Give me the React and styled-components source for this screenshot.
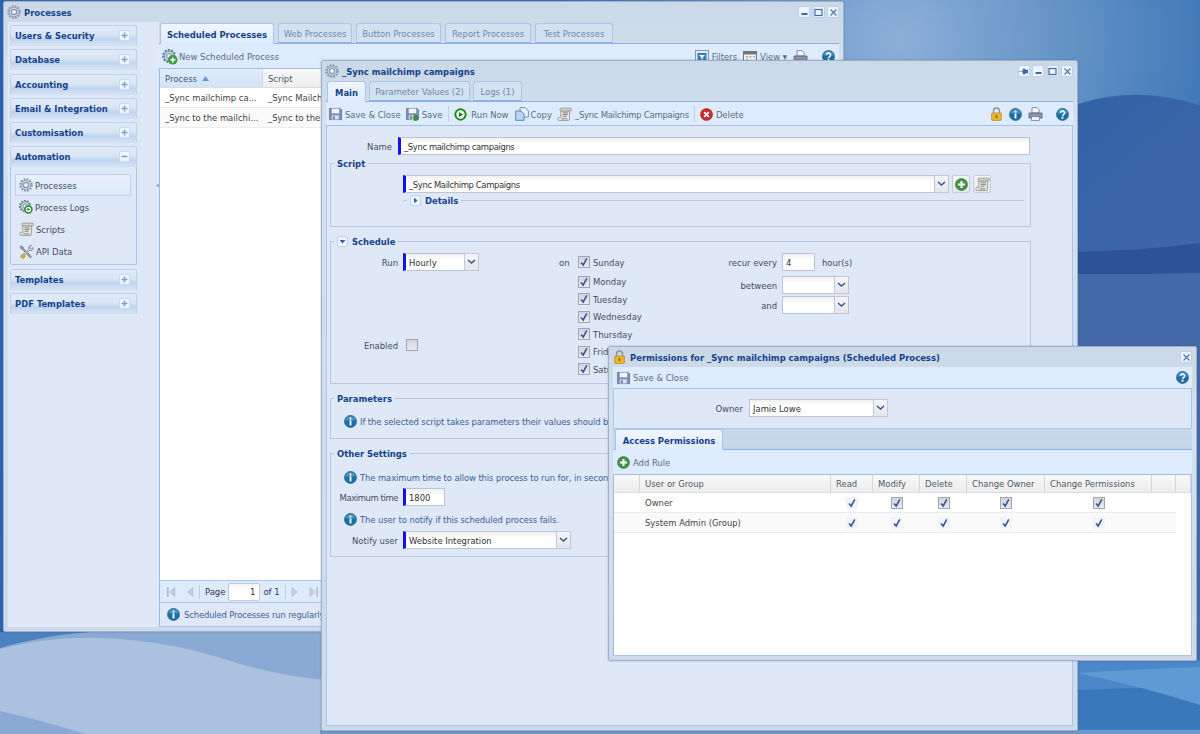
import React from "react";
import styled, { createGlobalStyle } from "styled-components";

const FONT = `"DejaVu Sans Condensed", Roboto, "Liberation Sans", Arial, sans-serif`;
const BASE = "9.4px";
const BOLD = `bold 9.4px ${FONT}`;

const Global = createGlobalStyle`
  * { box-sizing: border-box; }
  html, body { margin: 0; padding: 0; overflow: hidden; }
  body { font: ${BASE} ${FONT}; color: #333; }
`;

/* ---------- desktop ---------- */
const Desktop = styled.main`
  position: relative;
  width: 1200px;
  height: 734px;
  overflow: hidden;
  background: #3f78b8;
`;
const Wallpaper = styled.svg`
  position: absolute;
  inset: 0;
`;

/* ---------- window frame ---------- */
const Win = styled.section`
  position: absolute;
  left: ${(p) => p.$x}px;
  top: ${(p) => p.$y}px;
  width: ${(p) => p.$w}px;
  height: ${(p) => p.$h}px;
  display: flex;
  flex-direction: column;
  padding: 0 4px 4px;
  background: linear-gradient(#cbd8e7, #cfdcea 40px, #d5e1f1 60px, #cedaeb);
  border: 1px solid #9fb1c9;
  border-radius: 2px;
  box-shadow: 0 0 2px rgba(40, 60, 100, 0.35);
`;
const TitleBar = styled.header`
  flex: none;
  height: 20px;
  display: flex;
  align-items: center;
  gap: ${(p) => p.$gap ?? 3}px;
  margin-left: ${(p) => p.$ml ?? -1}px;
`;
const Title = styled.h1`
  flex: 1;
  margin: 0;
  font: ${BOLD};
  color: #15428b;
  white-space: nowrap;
`;
const ToolBtn = styled.button`
  width: 12px;
  height: 12px;
  padding: 0;
  display: flex;
  align-items: center;
  justify-content: center;
  background: #f0f5fd;
  border: 1px solid #bdd1ee;
  border-radius: 2px;
`;
const ToolSet = styled.div`
  display: flex;
  gap: 2.4px;
`;

/* ---------- tabs ---------- */
const TabStrip = styled.nav`
  flex: none;
  height: 21px;
  display: flex;
  align-items: flex-end;
  padding-left: ${(p) => p.$pad || 1}px;
  gap: ${(p) => p.$gap ?? 3}px;
  border-bottom: 1px solid #8db2e3;
  background: ${(p) => p.$bg || "transparent"};
`;
const Tab = styled.span`
  width: ${(p) => p.$w}px;
  height: ${(p) => (p.$active ? 21 : 20)}px;
  margin-bottom: ${(p) => (p.$active ? -1 : 0)}px;
  display: flex;
  align-items: center;
  justify-content: center;
  white-space: nowrap;
  border: 1px solid #a9c6ec;
  border-bottom: ${(p) => (p.$active ? "none" : "1px solid #8db2e3")};
  border-radius: 3px 3px 0 0;
  background: ${(p) => (p.$active ? "linear-gradient(#f0f6fe, #deebfc)" : "#d3e1f1")};
  color: ${(p) => (p.$active ? "#15428b" : "#7189ad")};
  font-weight: ${(p) => (p.$active ? "bold" : "normal")};
`;

/* ---------- toolbar ---------- */
const Toolbar = styled.div`
  flex: none;
  height: ${(p) => p.$h || 24}px;
  display: flex;
  align-items: center;
  padding: ${(p) => p.$pt ?? 1}px ${(p) => p.$pr ?? 4}px 0 ${(p) => p.$pl ?? 3}px;
  background: #deebfc;
  border-bottom: 1px solid #a3c0e8;
  color: #5d6b7f;
  white-space: nowrap;
`;
const ToolItem = styled.span`
  display: inline-flex;
  align-items: center;
  gap: ${(p) => p.$g ?? 3}px;
  margin-right: ${(p) => p.$mr ?? 5}px;
  letter-spacing: ${(p) => p.$ls || 0}px;
`;
const ToolSep = styled.i`
  width: 1px;
  height: 16px;
  background: #bcd0ea;
  margin: 0 5px 0 ${(p) => p.$ml || 0}px;
`;
const Fill = styled.span`
  flex: 1;
`;
const IconSlot = styled.span`
  display: inline-flex;
  margin-left: ${(p) => p.$ml || 0}px;
`;

/* ---------- processes window ---------- */
const Split = styled.div`
  flex: 1;
  min-height: 0;
  display: flex;
`;
const Sidebar = styled.aside`
  width: 148px;
  flex: none;
  padding: 3px 19px 0 2px;
  background: #dfe8f6;
  display: flex;
  flex-direction: column;
  gap: 3.3px;
`;
const Splitter = styled.div`
  width: 3px;
  flex: none;
  display: flex;
  align-items: center;
  background: #dfe8f6;
  padding-bottom: 280px;
  color: #7b93b5;
  font-size: 6px;
  line-height: 1;
`;
const SectionHead = styled.div`
  height: 21px;
  display: flex;
  align-items: center;
  justify-content: space-between;
  padding: 0 6px 0 4px;
  border: 1px solid #bcd2ee;
  border-bottom-color: #cfdff4;
  border-radius: 2px 2px 0 0;
  background: linear-gradient(#e0eaf7, #dbe6f5 45%, #bfd4f0 70%, #d6e3f5);
  font: ${BOLD};
  color: #15428b;
  white-space: nowrap;
`;
const PlusBox = styled.span`
  width: 11px;
  height: 11px;
  display: flex;
  align-items: center;
  justify-content: center;
  background: #f1f6fd;
  border: 1px solid #c9daf1;
  border-radius: 2px;
`;
const SectionBody = styled.div`
  height: 98px;
  padding: 7px 5px 0 4px;
  border: 1px solid #a9c6ec;
  border-top: none;
  border-radius: 0 0 2px 2px;
  display: flex;
  flex-direction: column;
`;
const NavItem = styled.div`
  height: 22px;
  display: flex;
  align-items: center;
  gap: 2px;
  padding-left: 3px;
  color: #3f4d63;
  border: 1px solid ${(p) => (p.$active ? "#bdd3ef" : "transparent")};
  background: ${(p) => (p.$active ? "linear-gradient(#e9f1fc, #dde9fa)" : "none")};
`;
const Content = styled.div`
  flex: 1;
  min-width: 0;
  display: flex;
  flex-direction: column;
  padding-top: 1px;
`;
const GridBox = styled.div`
  flex: 1;
  min-height: 0;
  background: #fff;
  border-left: 1px solid #99bbe8;
  display: flex;
  flex-direction: column;
`;
const GridHead = styled.div`
  flex: none;
  height: ${(p) => p.$h || 19}px;
  display: grid;
  grid-template-columns: ${(p) => p.$cols};
  background: linear-gradient(#f7f7f7, #eeeeee);
  border-bottom: 1px solid #dddddd;
  color: #4c5868;
`;
const HeadCell = styled.div`
  display: flex;
  align-items: center;
  gap: 5px;
  padding-left: 5px;
  white-space: nowrap;
  border-right: 1px solid #d6d6d6;
  background: ${(p) => (p.$sorted ? "linear-gradient(#dfecfb, #d2e3f8)" : "none")};
`;
const GridRow = styled.div`
  height: 20px;
  display: grid;
  grid-template-columns: ${(p) => p.$cols};
  width: ${(p) => p.$w || "100%"};
  background: ${(p) => (p.$alt ? "#fafafa" : "#fff")};
  border-bottom: 1px solid #ededed;
  color: #444;
`;
const Cell = styled.div`
  display: flex;
  align-items: center;
  justify-content: ${(p) => (p.$center ? "center" : "flex-start")};
  padding-left: ${(p) => (p.$center ? 0 : 5)}px;
  white-space: nowrap;
  overflow: hidden;
`;
const Pager = styled.div`
  flex: none;
  height: 23px;
  display: flex;
  align-items: center;
  padding-left: 7px;
  background: #deebfc;
  border-left: 1px solid #99bbe8;
  border-top: 1px solid #a9c6ec;
  border-bottom: 1px solid #a9c6ec;
  color: #334;
`;
const PagerSep = styled.i`
  width: 1px;
  height: 14px;
  margin: 0 5px;
  background: #b9cfeb;
`;
const PageInput = styled.span`
  width: 32px;
  height: 18px;
  margin: 0 3px;
  display: flex;
  align-items: center;
  justify-content: flex-end;
  padding-right: 4px;
  background: linear-gradient(#f3f3f3, #fff 5px);
  border: 1px solid #c2cadb;
  border-radius: 2px;
`;
const StatusBar = styled.div`
  flex: none;
  height: 24px;
  display: flex;
  align-items: center;
  gap: 4px;
  padding-left: 7px;
  letter-spacing: -0.15px;
  white-space: nowrap;
  overflow: hidden;
  background: #dfe8f6;
  border-left: 1px solid #99bbe8;
  border-bottom: 1px solid #a9c6ec;
  color: #3d5f97;
`;

/* ---------- form ---------- */
const FormBody = styled.div`
  flex: 1;
  min-height: 0;
  display: flex;
  flex-direction: column;
  padding: 11px 0 0 3px;
  background: #dfe8f6;
  border: 1px solid #a9c6ec;
  border-top: none;
`;
const Row = styled.div`
  display: flex;
  align-items: center;
  height: 18px;
  margin-top: ${(p) => p.$mt || 0}px;
  flex: none;
`;
const Label = styled.label`
  width: ${(p) => p.$w}px;
  margin-right: ${(p) => p.$mr ?? 5}px;
  flex: none;
  text-align: right;
  letter-spacing: ${(p) => p.$ls || 0}px;
  color: #3f4d63;
  white-space: nowrap;
`;
const Input = styled.div`
  width: ${(p) => p.$w}px;
  height: 18px;
  flex: none;
  display: flex;
  align-items: center;
  padding-left: 3px;
  letter-spacing: ${(p) => p.$ls || 0}px;
  white-space: nowrap;
  overflow: hidden;
  color: #333;
  background: linear-gradient(#f0f0f0, #fff 6px);
  border: 1px solid #bcc3d3;
  border-left: ${(p) => (p.$req ? "3px solid #1010f0" : "1px solid #bcc3d3")};
`;
const Combo = styled.div`
  width: ${(p) => p.$w}px;
  height: 18px;
  flex: none;
  display: flex;
`;
const ComboField = styled(Input)`
  flex: 1;
  width: auto;
  border-right: none;
`;
const ComboTrigger = styled.span`
  width: 15px;
  flex: none;
  display: flex;
  align-items: center;
  justify-content: center;
  background: linear-gradient(#f4f5f7, #e3e6ec);
  border: 1px solid #c2c8d6;
`;
const SquareBtn = styled.span`
  width: 18px;
  height: 18px;
  margin-left: 3px;
  display: flex;
  align-items: center;
  justify-content: center;
  background: linear-gradient(#f3f4f6, #e2e5ea);
  border: 1px solid #c8ccd6;
  border-radius: 2px;
`;
const Fieldset = styled.fieldset`
  flex: none;
  width: 701px;
  height: ${(p) => p.$h}px;
  margin: ${(p) => p.$mt ?? 7}px 0 0;
  padding: 0;
  min-width: 0;
  border: 1px solid #bcc6d8;
`;
const Legend = styled.legend`
  display: flex;
  align-items: center;
  gap: 4px;
  height: 14px;
  margin-left: 3px;
  padding: 0 3px;
  font: ${BOLD};
  color: #15428b;
  white-space: nowrap;
`;
const Toggle = styled.span`
  width: 11px;
  height: 11px;
  display: flex;
  align-items: center;
  justify-content: center;
  background: #eef4fc;
  border: 1px solid #bcd2ee;
  border-radius: 2px;
`;
const Inset = styled.div`
  margin-left: ${(p) => p.$ml}px;
  padding-top: ${(p) => p.$pt || 0}px;
`;
const SubFieldset = styled.fieldset`
  width: 621px;
  margin: 0;
  padding: 0;
  min-width: 0;
  border: none;
  border-top: 1px solid #bcc6d8;
`;
const SubLegend = styled(Legend)`
  margin-left: 4px;
`;
const ScheduleGrid = styled.div`
  display: grid;
  grid-template-columns: 220px 149px 1fr;
  padding-top: 5px;
`;
const Col = styled.div`
  display: flex;
  flex-direction: column;
`;
const DayCol = styled(Col)`
  flex-direction: row;
  padding-left: 8px;
`;
const OnText = styled.span`
  width: 19px;
  height: 18px;
  display: flex;
  align-items: center;
  color: #3f4d63;
`;
const DayRow = styled.div`
  height: 17.5px;
  display: flex;
  align-items: center;
  color: #3f4d63;
  &:first-child { height: 18px; margin-bottom: 2px; }
`;
const Check = styled.span`
  width: 12px;
  height: 12px;
  flex: none;
  display: inline-flex;
  align-items: center;
  justify-content: center;
  margin-right: ${(p) => p.$mr ?? 3}px;
  background: ${(p) => (p.$bare ? "#f3f4f8" : "linear-gradient(#d2d5da, #e9ebef)")};
  border: ${(p) => (p.$bare ? "none" : "1px solid #a2a6ae")};
`;
const InfoLine = styled.div`
  height: 16px;
  margin-top: ${(p) => p.$mt || 0}px;
  padding-left: 13px;
  display: flex;
  align-items: center;
  gap: 3px;
  letter-spacing: -0.1px;
  color: #3d5f97;
  white-space: nowrap;
`;
const Suffix = styled.span`
  margin-left: 7px;
  color: #3f4d63;
`;

/* ---------- permissions ---------- */
const OwnerPanel = styled.div`
  flex: none;
  height: 40px;
  padding-top: 10px;
  background: #dfe8f6;
  border: 1px solid #a9c6ec;
  border-top: none;
  border-radius: 0 0 2px 2px;
`;
const PermGrid = styled(GridBox)`
  border-right: 1px solid #a9c6ec;
  border-bottom: 1px solid #a9c6ec;
`;

/* ---------- icons ---------- */
const S = styled.svg`
  flex: none;
  display: block;
`;
const ArrowSvg = styled(S)`
  margin-right: ${(p) => p.$mr || 0}px;
`;
const Gear = ({ s = 14 }) => (
  <S width={s} height={s} viewBox="0 0 16 16">
    <circle cx="8" cy="8" r="6.6" fill="none" stroke="#8494ab" strokeWidth="2.2" strokeDasharray="2 1.45" />
    <circle cx="8" cy="8" r="5.4" fill="#d5dce6" stroke="#7d8ea6" strokeWidth=".8" />
    <circle cx="8" cy="8" r="3" fill="#eef1f6" stroke="#8494ab" strokeWidth="1.4" />
  </S>
);
const GearBadge = ({ kind, s = 16 }) => (
  <S width={s} height={s} viewBox="0 0 16 16">
    <circle cx="7" cy="7" r="6" fill="none" stroke="#60809e" strokeWidth="2" strokeDasharray="2 1.3" />
    <circle cx="7" cy="7" r="5" fill="#c4d2e0" stroke="#5e7c9c" strokeWidth=".8" />
    <circle cx="7" cy="7" r="2.4" fill="#eef3f8" stroke="#6f8aa6" />
    <circle cx="10.8" cy="10.8" r="4.8" fill={kind === "play" ? "#1c8a1c" : "#3f9b45"} />
    <circle cx="10.8" cy="10.8" r="3.1" fill={kind === "play" ? "#fff" : "#3f9b45"} />
    {kind === "play" ? (
      <path d="M9.6 8.9 L13 10.8 L9.6 12.7Z" fill="#1c8a1c" />
    ) : (
      <path d="M10 8.4h1.6V10h1.8v1.6h-1.8v1.8H10v-1.8H8.4V10H10Z" fill="#fff" />
    )}
  </S>
);
const ScrollIcon = () => (
  <S width="15" height="15" viewBox="0 0 16 16">
    <path d="M4 4.2V11H2.6a1.5 1.5 0 0 0 0 3.4H12a1.6 1.6 0 0 0 1.4-1.6V4.2Z" fill="#e6e6e2" stroke="#8b8b86" strokeWidth=".8" />
    <path d="M4.6 1.2H14a1.5 1.5 0 0 1 0 3H4.6a1.5 1.5 0 0 1 0-3Z" fill="#d2d2ce" stroke="#8b8b86" strokeWidth=".8" />
    <path d="M6 6.3h5.6M6 8.1h5.6M6 9.9h4M4.6 12.6h6.4" stroke="#77776f" strokeWidth=".9" />
  </S>
);
const ToolsIcon = () => (
  <S width="15" height="15" viewBox="0 0 16 16">
    <path d="M2 2l2.4 1.2L5 5l8.5 8.5-1.4 1.4L4 6 2.2 5.2 1 3Z" fill="#9aa3ad" stroke="#5f6872" strokeWidth=".6" />
    <path d="M13.4 1.4a3 3 0 0 0-3 4.1L2 13.4 3.4 15l7.9-8a3 3 0 0 0 4-3.4L13 5.4 11.4 4.2 13.4 1.4Z" fill="#c9ced4" stroke="#6a7380" strokeWidth=".6" />
    <path d="M1.6 13l3 2.6 2.4-2.6-2.8-2.6Z" fill="#e3b02c" stroke="#9b7a1e" strokeWidth=".5" />
  </S>
);
const Floppy = ({ arrow }) => (
  <S width="13" height="14" viewBox="0 0 14 15">
    <path d="M.5 1.5h11.5l1.5 1.5v10.5H.5Z" fill="#7f90b8" stroke="#5d6b90" strokeWidth=".8" />
    <rect x="3" y="1.7" width="8" height="5" fill="#f2f4f8" />
    <rect x="3" y="9" width="7.5" height="4.4" fill="#dfe3ea" />
    <rect x="4.2" y="9.8" width="2" height="3.4" fill="#6b7a9c" />
    {arrow && <path d="M8.6 14.6v-3H7l3.2-3.6 3.4 3.6h-1.7v3Z" fill="#2f9a3a" stroke="#1d7126" strokeWidth=".5" />}
  </S>
);
const RunIcon = () => (
  <S width="13" height="13" viewBox="0 0 14 14">
    <circle cx="7" cy="7" r="6.6" fill="#1d8a1f" />
    <circle cx="7" cy="7" r="4.5" fill="#fff" />
    <path d="M5.2 4.2 L10.2 7 L5.2 9.8Z" fill="#1d8a1f" />
  </S>
);
const CopyIcon = () => (
  <S width="14" height="14" viewBox="0 0 14 14">
    <path d="M5 .7h5.4l3 3V10H5Z" fill="#eaf2fb" stroke="#5a89bd" strokeWidth=".9" />
    <path d="M.7 4h5.4l3 3v6.3H.7Z" fill="#bcd6f0" stroke="#4a7fb7" strokeWidth=".9" />
  </S>
);
const DeleteIcon = () => (
  <S width="13" height="13" viewBox="0 0 14 14">
    <circle cx="7" cy="7" r="6.5" fill="#cf2a2a" stroke="#a81818" strokeWidth=".6" />
    <path d="M4.5 4.5 L9.5 9.5 M9.5 4.5 L4.5 9.5" stroke="#fff" strokeWidth="2" />
  </S>
);
const AddIcon = ({ s = 13 }) => (
  <S width={s} height={s} viewBox="0 0 14 14">
    <circle cx="7" cy="7" r="6.5" fill="#3f9148" stroke="#2e7a37" strokeWidth=".6" />
    <path d="M7 3.2v7.6M3.2 7h7.6" stroke="#fff" strokeWidth="2.2" />
  </S>
);
const LockIcon = () => (
  <S width="11" height="14" viewBox="0 0 11 14">
    <path d="M2.5 6.5V4a3 3 0 0 1 6 0v2.5" fill="none" stroke="#8f9399" strokeWidth="1.4" />
    <rect x=".6" y="6" width="9.8" height="7.4" rx="1" fill="#eeb62e" stroke="#b58417" strokeWidth=".7" />
    <rect x="4.7" y="8" width="1.6" height="3.2" fill="#8a6610" />
  </S>
);
const Glossy = ({ s = 13, children }) => (
  <S width={s} height={s} viewBox="0 0 14 14">
    <circle cx="7" cy="7" r="6.6" fill="#1c6fa3" stroke="#275d82" strokeWidth=".5" />
    <path d="M1.5 6a5.6 5.6 0 0 1 11 0Z" fill="#5ba4cf" opacity=".7" />
    {children}
  </S>
);
const InfoIcon = ({ s }) => (
  <Glossy s={s}>
    <rect x="6" y="2.8" width="2" height="2" fill="#fff" />
    <rect x="6" y="5.8" width="2" height="5.4" fill="#fff" />
  </Glossy>
);
const HelpIcon = ({ s }) => (
  <Glossy s={s}>
    <path d="M4.8 5.2a2.2 2.2 0 1 1 3.4 1.9c-.8.5-1.2.8-1.2 1.7" fill="none" stroke="#fff" strokeWidth="1.6" />
    <rect x="6" y="9.6" width="2" height="1.9" fill="#fff" />
  </Glossy>
);
const PrintIcon = () => (
  <S width="15" height="14" viewBox="0 0 15 14">
    <path d="M4 .6h5l2 2V6H4Z" fill="#f5f6f8" stroke="#6d7587" strokeWidth=".8" />
    <path d="M1 6h13v5H1Z" fill="#8a94aa" stroke="#566078" strokeWidth=".8" />
    <rect x="3.4" y="9.5" width="8.2" height="3.9" fill="#eef0f4" stroke="#6d7587" strokeWidth=".7" />
  </S>
);
const FilterIcon = () => (
  <S width="14" height="14" viewBox="0 0 14 14">
    <rect x=".5" y=".5" width="13" height="13" fill="#e5e8ee" stroke="#8e96a6" />
    <rect x="2.5" y="3" width="9" height="8" fill="#2f7fc0" />
    <path d="M4 5h6l-2.3 2.6v2.2l-1.4-.8V7.6Z" fill="#fff" />
  </S>
);
const ViewIcon = () => (
  <S width="14" height="12" viewBox="0 0 14 12">
    <rect x=".5" y=".5" width="13" height="11" fill="#f0f1f3" stroke="#70757f" />
    <rect x="1" y="1" width="12" height="2.4" fill="#6a7486" />
    <path d="M3 5h2v1.5H3Zm3.5 0h2v1.5h-2Z" fill="#d8a64a" />
    <path d="M10 5h2v1.5h-2ZM3 8h2v1.5H3Z" fill="#9cb4d6" />
  </S>
);
const Mark = ({ kind }) => {
  const d = {
    min: <rect x="1.5" y="5" width="6" height="2" fill="#3d6aa6" />,
    max: <rect x="1" y="1.5" width="7" height="6" fill="none" stroke="#3d6aa6" strokeWidth="1.2" />,
    close: <path d="M1.5 1.5l6 6m0-6l-6 6" stroke="#4c7ab5" strokeWidth="1.3" />,
    pin: <path d="M0 4.5h4M4 2h2v5H4ZM6 3h3v3H6Z" fill="#3d6aa6" stroke="#3d6aa6" strokeWidth=".6" />,
  }[kind];
  return <S width="9" height="9" viewBox="0 0 9 9">{d}</S>;
};
const PlusMark = ({ minus }) => (
  <S width="9" height="9" viewBox="0 0 9 9">
    <path d={minus ? "M1.5 4.5h6" : "M4.5 1.5v6M1.5 4.5h6"} stroke="#7f9fcc" strokeWidth="1.6" />
  </S>
);
const Chevron = () => (
  <S width="9" height="6" viewBox="0 0 9 6">
    <path d="M1 1l3.5 3L8 1" fill="none" stroke="#33588f" strokeWidth="1.5" />
  </S>
);
const Tri = ({ dir }) => (
  <S width="7" height="7" viewBox="0 0 7 7">
    <path d={dir === "right" ? "M2 .8L5.6 3.5 2 6.2Z" : "M.6 2L6.4 2 3.5 5.4Z"} fill="#2f5fa8" />
  </S>
);
const Tick = () => (
  <S width="10" height="10" viewBox="0 0 10 10">
    <path d="M2 5.4 L4.2 8 L7.8 1.4" fill="none" stroke="#3a569c" strokeWidth="1.6" />
  </S>
);
const SortUp = () => (
  <S width="7" height="5" viewBox="0 0 7 5">
    <path d="M3.5 0L7 5H0Z" fill="#6f97cf" />
  </S>
);
const PageArrow = ({ dir, bar, mr }) => (
  <ArrowSvg $mr={mr} width="9" height="10" viewBox="0 0 9 10">
    {dir === "left" ? (
      <>
        {bar && <rect x="0" y="0" width="1.6" height="10" fill="#b3bac6" />}
        <path d="M8 .5v9L2.5 5Z" fill="#c8ccd4" stroke="#aeb4bf" strokeWidth=".5" />
      </>
    ) : (
      <>
        {bar && <rect x="7.4" y="0" width="1.6" height="10" fill="#b3bac6" />}
        <path d="M1 .5v9L6.5 5Z" fill="#c8ccd4" stroke="#aeb4bf" strokeWidth=".5" />
      </>
    )}
  </ArrowSvg>
);

/* ---------- composite ---------- */
const Tools = ({ kinds }) => (
  <ToolSet>
    {kinds.map((k) => (
      <ToolBtn key={k} type="button" aria-label={k}>
        <Mark kind={k} />
      </ToolBtn>
    ))}
  </ToolSet>
);
const ComboBox = ({ w, req, value, ls }) => (
  <Combo $w={w}>
    <ComboField $req={req} $ls={ls}>{value}</ComboField>
    <ComboTrigger>
      <Chevron />
    </ComboTrigger>
  </Combo>
);

const sections1 = ["Users & Security", "Database", "Accounting", "Email & Integration", "Customisation"];
const days = ["Sunday", "Monday", "Tuesday", "Wednesday", "Thursday", "Friday", "Saturday"];
const permCols = "26px 191px 42px 47px 47px 78px 107px 24px 1fr";
const procCols = "103px 120px 1fr";

const Section = ({ name }) => (
  <SectionHead>
    {name}
    <PlusBox>
      <PlusMark />
    </PlusBox>
  </SectionHead>
);

const ProcessesWindow = () => (
  <Win $x={3} $y={1} $w={841} $h={631}>
    <TitleBar>
      <Gear />
      <Title>Processes</Title>
      <Tools kinds={["min", "max", "close"]} />
    </TitleBar>
    <Split>
      <Sidebar>
        {sections1.map((n) => (
          <Section key={n} name={n} />
        ))}
        <div>
          <SectionHead>
            Automation
            <PlusBox>
              <PlusMark minus />
            </PlusBox>
          </SectionHead>
          <SectionBody>
            <NavItem $active>
              <Gear />
              Processes
            </NavItem>
            <NavItem>
              <GearBadge kind="play" s={14} />
              Process Logs
            </NavItem>
            <NavItem>
              <ScrollIcon />
              Scripts
            </NavItem>
            <NavItem>
              <ToolsIcon />
              API Data
            </NavItem>
          </SectionBody>
        </div>
        <Section name="Templates" />
        <Section name="PDF Templates" />
      </Sidebar>
      <Splitter>◂</Splitter>
      <Content>
        <TabStrip $gap={4}>
          <Tab $active $w={114}>Scheduled Processes</Tab>
          <Tab $w={74}>Web Processes</Tab>
          <Tab $w={85}>Button Processes</Tab>
          <Tab $w={86}>Report Processes</Tab>
          <Tab $w={78}>Test Processes</Tab>
        </TabStrip>
        <Toolbar $h={25} $pl={3} $pr={4}>
          <ToolItem $g={1}>
            <GearBadge kind="add" />
            New Scheduled Process
          </ToolItem>
          <Fill />
          <ToolItem $mr={6}>
            <FilterIcon />
            Filters
          </ToolItem>
          <ToolItem $mr={6}>
            <ViewIcon />
            View ▾
          </ToolItem>
          <IconSlot>
            <PrintIcon />
          </IconSlot>
          <IconSlot $ml={14}>
            <HelpIcon />
          </IconSlot>
        </Toolbar>
        <GridBox>
          <GridHead $cols={procCols}>
            <HeadCell $sorted>
              Process
              <SortUp />
            </HeadCell>
            <HeadCell>Script</HeadCell>
            <HeadCell />
          </GridHead>
          <GridRow $cols={procCols}>
            <Cell>_Sync mailchimp ca...</Cell>
            <Cell>_Sync Mailchimp Campaigns</Cell>
          </GridRow>
          <GridRow $alt $cols={procCols}>
            <Cell>_Sync to the mailchi...</Cell>
            <Cell>_Sync to the mailchimp list</Cell>
          </GridRow>
        </GridBox>
        <Pager>
          <PageArrow dir="left" bar mr={9} />
          <PageArrow dir="left" />
          <PagerSep />
          Page
          <PageInput>1</PageInput>
          of 1
          <PagerSep />
          <PageArrow dir="right" mr={9} />
          <PageArrow dir="right" bar />
        </Pager>
        <StatusBar>
          <InfoIcon />
          Scheduled Processes run regularly at the times configured here
        </StatusBar>
      </Content>
    </Split>
  </Win>
);

const MainWindow = () => (
  <Win $x={321} $y={60} $w={757} $h={671}>
    <TitleBar>
      <Gear />
      <Title>_Sync mailchimp campaigns</Title>
      <Tools kinds={["pin", "min", "max", "close"]} />
    </TitleBar>
    <TabStrip>
      <Tab $active $w={39}>Main</Tab>
      <Tab $w={101}>Parameter Values (2)</Tab>
      <Tab $w={49}>Logs (1)</Tab>
    </TabStrip>
    <Toolbar $pl={3} $pr={4}>
      <ToolItem>
        <Floppy />
        Save &amp; Close
      </ToolItem>
      <ToolItem $mr={6}>
        <Floppy arrow />
        Save
      </ToolItem>
      <ToolSep />
      <ToolItem $g={4} $mr={6}>
        <RunIcon />
        Run Now
      </ToolItem>
      <ToolItem $g={2} $mr={5}>
        <CopyIcon />
        Copy
      </ToolItem>
      <ToolItem $ls={-0.25}>
        <ScrollIcon />
        _Sync Mailchimp Campaigns
      </ToolItem>
      <ToolSep />
      <ToolItem>
        <DeleteIcon />
        Delete
      </ToolItem>
      <Fill />
      <IconSlot>
        <LockIcon />
      </IconSlot>
      <IconSlot $ml={7}>
        <InfoIcon />
      </IconSlot>
      <IconSlot $ml={6}>
        <PrintIcon />
      </IconSlot>
      <IconSlot $ml={13}>
        <HelpIcon />
      </IconSlot>
    </Toolbar>
    <FormBody>
      <Row>
        <Label $w={62} $mr={6}>Name</Label>
        <Input $w={632} $req $ls={-0.38}>_Sync mailchimp campaigns</Input>
      </Row>
      <Fieldset $h={71} $mt={1}>
        <Legend>Script</Legend>
        <Inset $ml={72} $pt={5}>
          <Row>
            <ComboBox w={546} req ls={-0.38} value="_Sync Mailchimp Campaigns" />
            <SquareBtn>
              <AddIcon s={13} />
            </SquareBtn>
            <SquareBtn>
              <ScrollIcon />
            </SquareBtn>
          </Row>
          <SubFieldset>
            <SubLegend>
              <Toggle>
                <Tri dir="right" />
              </Toggle>
              Details
            </SubLegend>
          </SubFieldset>
        </Inset>
      </Fieldset>
      <Fieldset $h={150}>
        <Legend>
          <Toggle>
            <Tri dir="down" />
          </Toggle>
          Schedule
        </Legend>
        <ScheduleGrid>
          <Col>
            <Row>
              <Label $w={67}>Run</Label>
              <ComboBox w={76} req value="Hourly" />
            </Row>
            <Row $mt={65}>
              <Label $w={67} $mr={8}>Enabled</Label>
              <Check />
            </Row>
          </Col>
          <DayCol>
            <OnText>on</OnText>
            <div>
              {days.map((d) => (
                <DayRow key={d}>
                  <Check>
                    <Tick />
                  </Check>
                  {d}
                </DayRow>
              ))}
            </div>
          </DayCol>
          <Col>
            <Row>
              <Label $w={77}>recur every</Label>
              <Input $w={33}>4</Input>
              <Suffix>hour(s)</Suffix>
            </Row>
            <Row $mt={5}>
              <Label $w={77}>between</Label>
              <ComboBox w={67} />
            </Row>
            <Row $mt={2}>
              <Label $w={77}>and</Label>
              <ComboBox w={67} />
            </Row>
          </Col>
        </ScheduleGrid>
      </Fieldset>
      <Fieldset $h={48}>
        <Legend>Parameters</Legend>
        <InfoLine $mt={8}>
          <InfoIcon />
          If the selected script takes parameters their values should be set on the Parameter Values tab.
        </InfoLine>
      </Fieldset>
      <Fieldset $h={111}>
        <Legend>Other Settings</Legend>
        <InfoLine $mt={9}>
          <InfoIcon />
          The maximum time to allow this process to run for, in seconds.
        </InfoLine>
        <Row $mt={3}>
          <Label $w={67} $ls={-0.4}>Maximum time</Label>
          <Input $w={42} $req>1800</Input>
        </Row>
        <InfoLine $mt={5}>
          <InfoIcon />
          The user to notify if this scheduled process fails.
        </InfoLine>
        <Row $mt={4}>
          <Label $w={67}>Notify user</Label>
          <ComboBox w={168} req value="Website Integration" />
        </Row>
      </Fieldset>
    </FormBody>
  </Win>
);

const PermissionsWindow = () => (
  <Win $x={608} $y={346} $w={589} $h={315}>
    <TitleBar $ml={1} $gap={5}>
      <LockIcon />
      <Title>Permissions for _Sync mailchimp campaigns (Scheduled Process)</Title>
      <Tools kinds={["close"]} />
    </TitleBar>
    <Toolbar $h={22} $pt={0} $pl={4} $pr={3}>
      <ToolItem>
        <Floppy />
        Save &amp; Close
      </ToolItem>
      <Fill />
      <HelpIcon />
    </Toolbar>
    <OwnerPanel>
      <Row>
        <Label $w={129} $mr={6}>Owner</Label>
        <ComboBox w={139} value="Jamie Lowe" />
      </Row>
    </OwnerPanel>
    <TabStrip $pad={2} $bg="linear-gradient(#c9d9eb, #c3d6ed)">
      <Tab $active $w={108}>Access Permissions</Tab>
    </TabStrip>
    <Toolbar $h={25} $pt={0} $pl={4}>
      <ToolItem>
        <AddIcon />
        Add Rule
      </ToolItem>
    </Toolbar>
    <PermGrid>
      <GridHead $h={18} $cols={permCols}>
        <HeadCell />
        <HeadCell>User or Group</HeadCell>
        <HeadCell>Read</HeadCell>
        <HeadCell>Modify</HeadCell>
        <HeadCell>Delete</HeadCell>
        <HeadCell>Change Owner</HeadCell>
        <HeadCell>Change Permissions</HeadCell>
        <HeadCell />
        <HeadCell />
      </GridHead>
      <GridRow $cols={permCols} $w="562px">
        <Cell />
        <Cell>Owner</Cell>
        <Cell $center><Check $bare $mr={0}><Tick /></Check></Cell>
        <Cell $center><Check $mr={0}><Tick /></Check></Cell>
        <Cell $center><Check $mr={0}><Tick /></Check></Cell>
        <Cell $center><Check $mr={0}><Tick /></Check></Cell>
        <Cell $center><Check $mr={0}><Tick /></Check></Cell>
      </GridRow>
      <GridRow $alt $cols={permCols} $w="562px">
        <Cell />
        <Cell>System Admin (Group)</Cell>
        <Cell $center><Check $bare $mr={0}><Tick /></Check></Cell>
        <Cell $center><Check $bare $mr={0}><Tick /></Check></Cell>
        <Cell $center><Check $bare $mr={0}><Tick /></Check></Cell>
        <Cell $center><Check $bare $mr={0}><Tick /></Check></Cell>
        <Cell $center><Check $bare $mr={0}><Tick /></Check></Cell>
      </GridRow>
    </PermGrid>
  </Win>
);

const Background = () => (
  <Wallpaper width="1200" height="734" viewBox="0 0 1200 734">
    <defs>
      <radialGradient id="sky" gradientUnits="userSpaceOnUse" cx="900" cy="40" r="340">
        <stop offset="0" stopColor="#8cafd8" />
        <stop offset=".55" stopColor="#5f8fc4" />
        <stop offset="1" stopColor="#3873b3" />
      </radialGradient>
      <linearGradient id="hill" x1="0" y1="0" x2="1" y2="1">
        <stop offset="0" stopColor="#3261a6" />
        <stop offset="1" stopColor="#4068aa" />
      </linearGradient>
    </defs>
    <rect width="1200" height="734" fill="url(#sky)" />
    <rect width="4" height="632" fill="#2b64ae" />
    <path d="M1030 125 Q1130 68 1230 118 L1240 270 L1040 270Z" fill="url(#hill)" />
    <path d="M1070 252 Q1140 251 1200 243 L1200 273 Q1140 274 1070 275Z" fill="#2d5296" />
    <rect x="1070" y="274" width="130" height="390" fill="#4469a9" />
    <rect x="1070" y="660" width="130" height="74" fill="#3a78bc" />
    <path d="M1078 660H1200V688Q1140 687 1078 690Z" fill="#4a88c9" />
    <path d="M1078 673Q1140 669 1200 667V705Q1140 686 1078 673Z" fill="#5e9bd5" />
    <rect y="632" width="330" height="102" fill="#8aa9d4" />
    <path d="M0 632H90Q40 636 0 648Z" fill="#4c80bf" />
    <path d="M0 649 Q50 636 100 638 Q170 640 240 664 Q290 678 330 680 V734 H86 Q40 720 0 711Z" fill="#aac1e0" />
    <rect x="320" y="730" width="880" height="4" fill="#6f97c9" />
  </Wallpaper>
);

export default function App() {
  return (
    <>
      <Global />
      <Desktop>
        <Background />
        <ProcessesWindow />
        <MainWindow />
        <PermissionsWindow />
      </Desktop>
    </>
  );
}
